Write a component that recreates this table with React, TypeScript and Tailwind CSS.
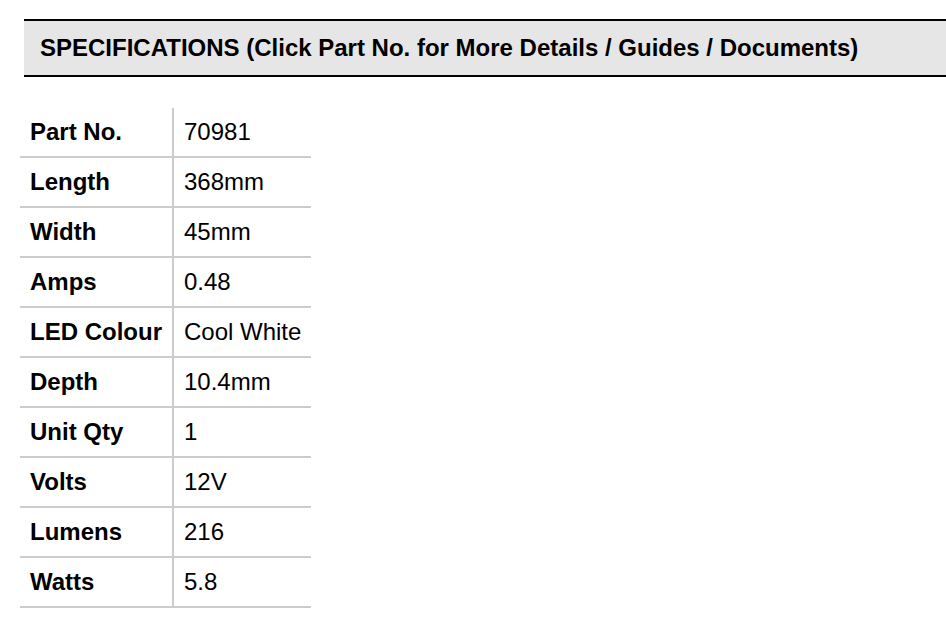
import React from 'react';

const specs: [string, string][] = [
  ['Part No.', '70981'],
  ['Length', '368mm'],
  ['Width', '45mm'],
  ['Amps', '0.48'],
  ['LED Colour', 'Cool White'],
  ['Depth', '10.4mm'],
  ['Unit Qty', '1'],
  ['Volts', '12V'],
  ['Lumens', '216'],
  ['Watts', '5.8'],
];

const App: React.FC = () => {
  return (
    <div
      className="min-h-screen bg-white text-black"
      style={{ fontFamily: '"Liberation Sans", Arial, sans-serif' }}
    >
      <div className="pt-[19px] pl-[24px]">
        {/* Section header */}
        <div className="h-[58px] border-t-2 border-b-2 border-black bg-[#e6e6e6] flex items-center pl-[16px]">
          <h2 className="text-[24px] font-bold leading-none">
            SPECIFICATIONS (Click Part No. for More Details / Guides / Documents)
          </h2>
        </div>
      </div>

      {/* Spec table */}
      <div className="mt-[31px] ml-[20px] w-[291px]">
        {specs.map(([label, value]) => (
          <div key={label} className="flex h-[50px] border-b-2 border-[#cccccc]">
            <div className="w-[154px] border-r-2 border-[#cccccc] pl-[10px] flex items-center text-[24px] font-bold">
              {label}
            </div>
            <div className="flex-1 pl-[10px] flex items-center text-[24px]">{value}</div>
          </div>
        ))}
      </div>
    </div>
  );
};

export default App;
